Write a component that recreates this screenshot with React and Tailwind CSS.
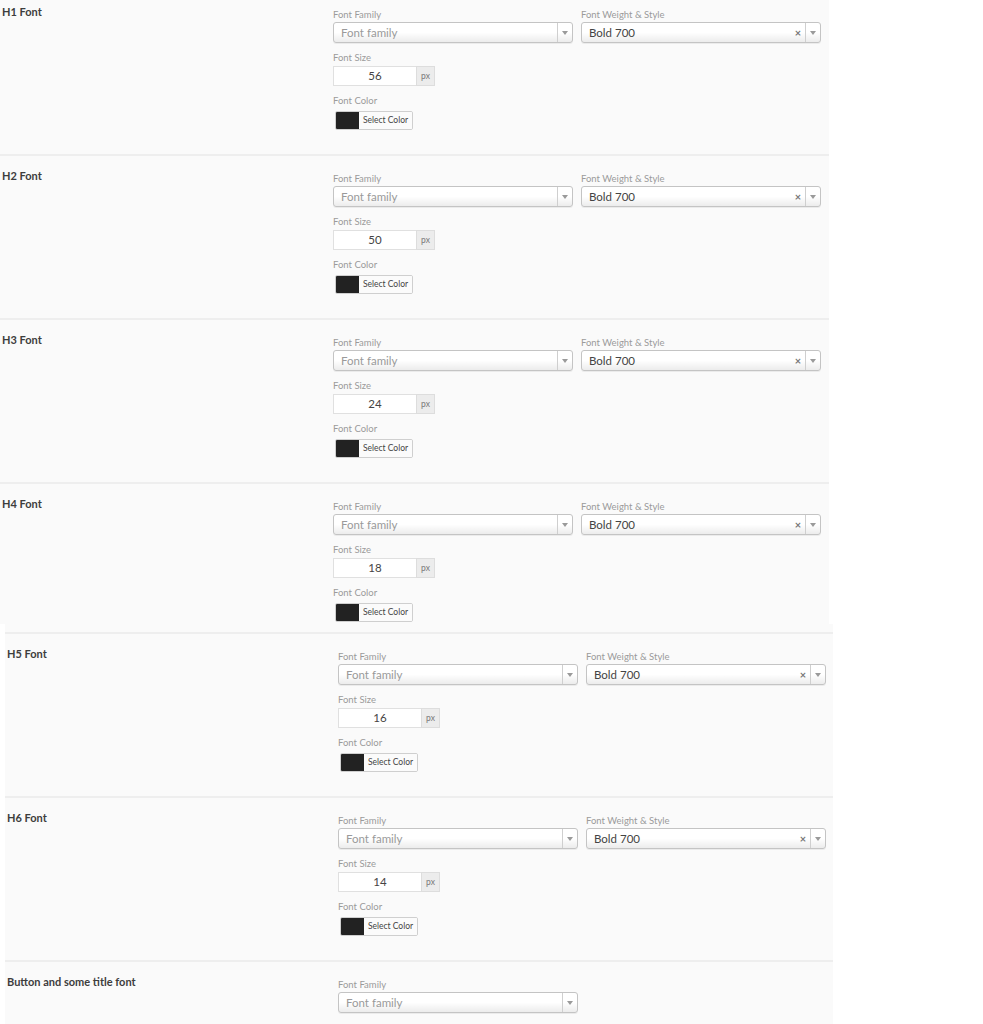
import React from "react";

const FONT = { fontFamily: "Lato, 'Open Sans', 'Noto Sans', sans-serif" };

function Arrow() {
  return (
    <svg width="6" height="4" viewBox="0 0 6 4" className="block">
      <path d="M0 0 L6 0 L3 4 Z" fill="#9a9a9a" />
    </svg>
  );
}

function Select({ value, placeholder, clearable }) {
  return (
    <div className="flex h-[21px] w-[240px] items-stretch rounded-[3px] border border-[#c4c4c4] bg-gradient-to-b from-white from-50% to-[#ececec] shadow-[0_1px_0_rgba(0,0,0,0.06)]">
      <div
        className={
          "flex flex-1 items-center pl-[7px] text-[11.5px] leading-none " +
          (value ? "text-[#444]" : "text-[#9a9a9a]")
        }
      >
        {value || placeholder}
      </div>
      {clearable && (
        <div className="flex w-[14px] items-center justify-center pb-[1px] text-[11px] font-bold leading-none text-[#777]">
          ×
        </div>
      )}
      <div className="flex w-[15px] items-center justify-center border-l border-[#cfcfcf]">
        <Arrow />
      </div>
    </div>
  );
}

function Label({ children, className = "" }) {
  return (
    <div className={"h-[12px] text-[9.5px] leading-[12px] text-[#9b9b9b] " + className}>
      {children}
    </div>
  );
}

function Section({ title, size, last, full = true, bordered = true, top }) {
  return (
    <div
      className={
        "flex " +
        (bordered ? "border-t-2 border-[#eeeeee] " : "") +
        (last ? "pb-[2px] " : "pb-[24px] ")
      }
      style={{ paddingTop: top }}
    >
      <div className="w-[333px] shrink-0 pl-[2px]">
        <div className="mt-[-3px] text-[11px] font-bold leading-[12px] text-[#3d3d3d]">
          {title}
        </div>
      </div>
      <div className="flex flex-col">
        <div className="flex gap-[8px]">
          <div className="flex flex-col">
            <Label>Font Family</Label>
            <div className="mt-[1px]">
              <Select placeholder="Font family" />
            </div>
          </div>
          {full && (
            <div className="flex flex-col">
              <Label>Font Weight &amp; Style</Label>
              <div className="mt-[1px]">
                <Select value="Bold 700" clearable />
              </div>
            </div>
          )}
        </div>
        {full && (
          <>
            <Label className="mt-[9px]">Font Size</Label>
            <div className="mt-[2px] flex h-[20px] w-[102px]">
              <div className="flex w-[83px] items-center justify-center border border-r-0 border-[#e0e0e0] bg-white text-[11.5px] leading-none text-[#444]">
                {size}
              </div>
              <div className="flex w-[19px] items-center justify-center border border-[#dddddd] bg-[#ececec] text-[8.5px] leading-none text-[#777]">
                px
              </div>
            </div>
            <Label className="mt-[9px]">Font Color</Label>
            <div className="ml-[2px] mt-[4px] flex h-[19px] w-[78px] overflow-hidden rounded-[2px] border border-[#cfcfcf] bg-white">
              <div className="w-[23px] bg-[#222222]" />
              <div className="flex flex-1 items-center justify-center bg-[#fbfbfb] text-[8.5px] leading-none text-[#444]">
                Select Color
              </div>
            </div>
          </>
        )}
      </div>
    </div>
  );
}

export default function App() {
  return (
    <div className="h-[1024px] w-[983px] overflow-hidden bg-white" style={FONT}>
      <div className="w-[829px] bg-[#fafafa]">
        <Section title="H1 Font" size="56" bordered={false} top={9} />
        <Section title="H2 Font" size="50" top={17} />
        <Section title="H3 Font" size="24" top={17} />
        <Section title="H4 Font" size="18" top={17} last />
      </div>
      <div className="ml-[5px] w-[828px] bg-[#fafafa] pt-[8px]">
        <Section title="H5 Font" size="16" top={17} />
        <Section title="H6 Font" size="14" top={17} />
        <Section title="Button and some title font" top={17} full={false} />
      </div>
    </div>
  );
}
